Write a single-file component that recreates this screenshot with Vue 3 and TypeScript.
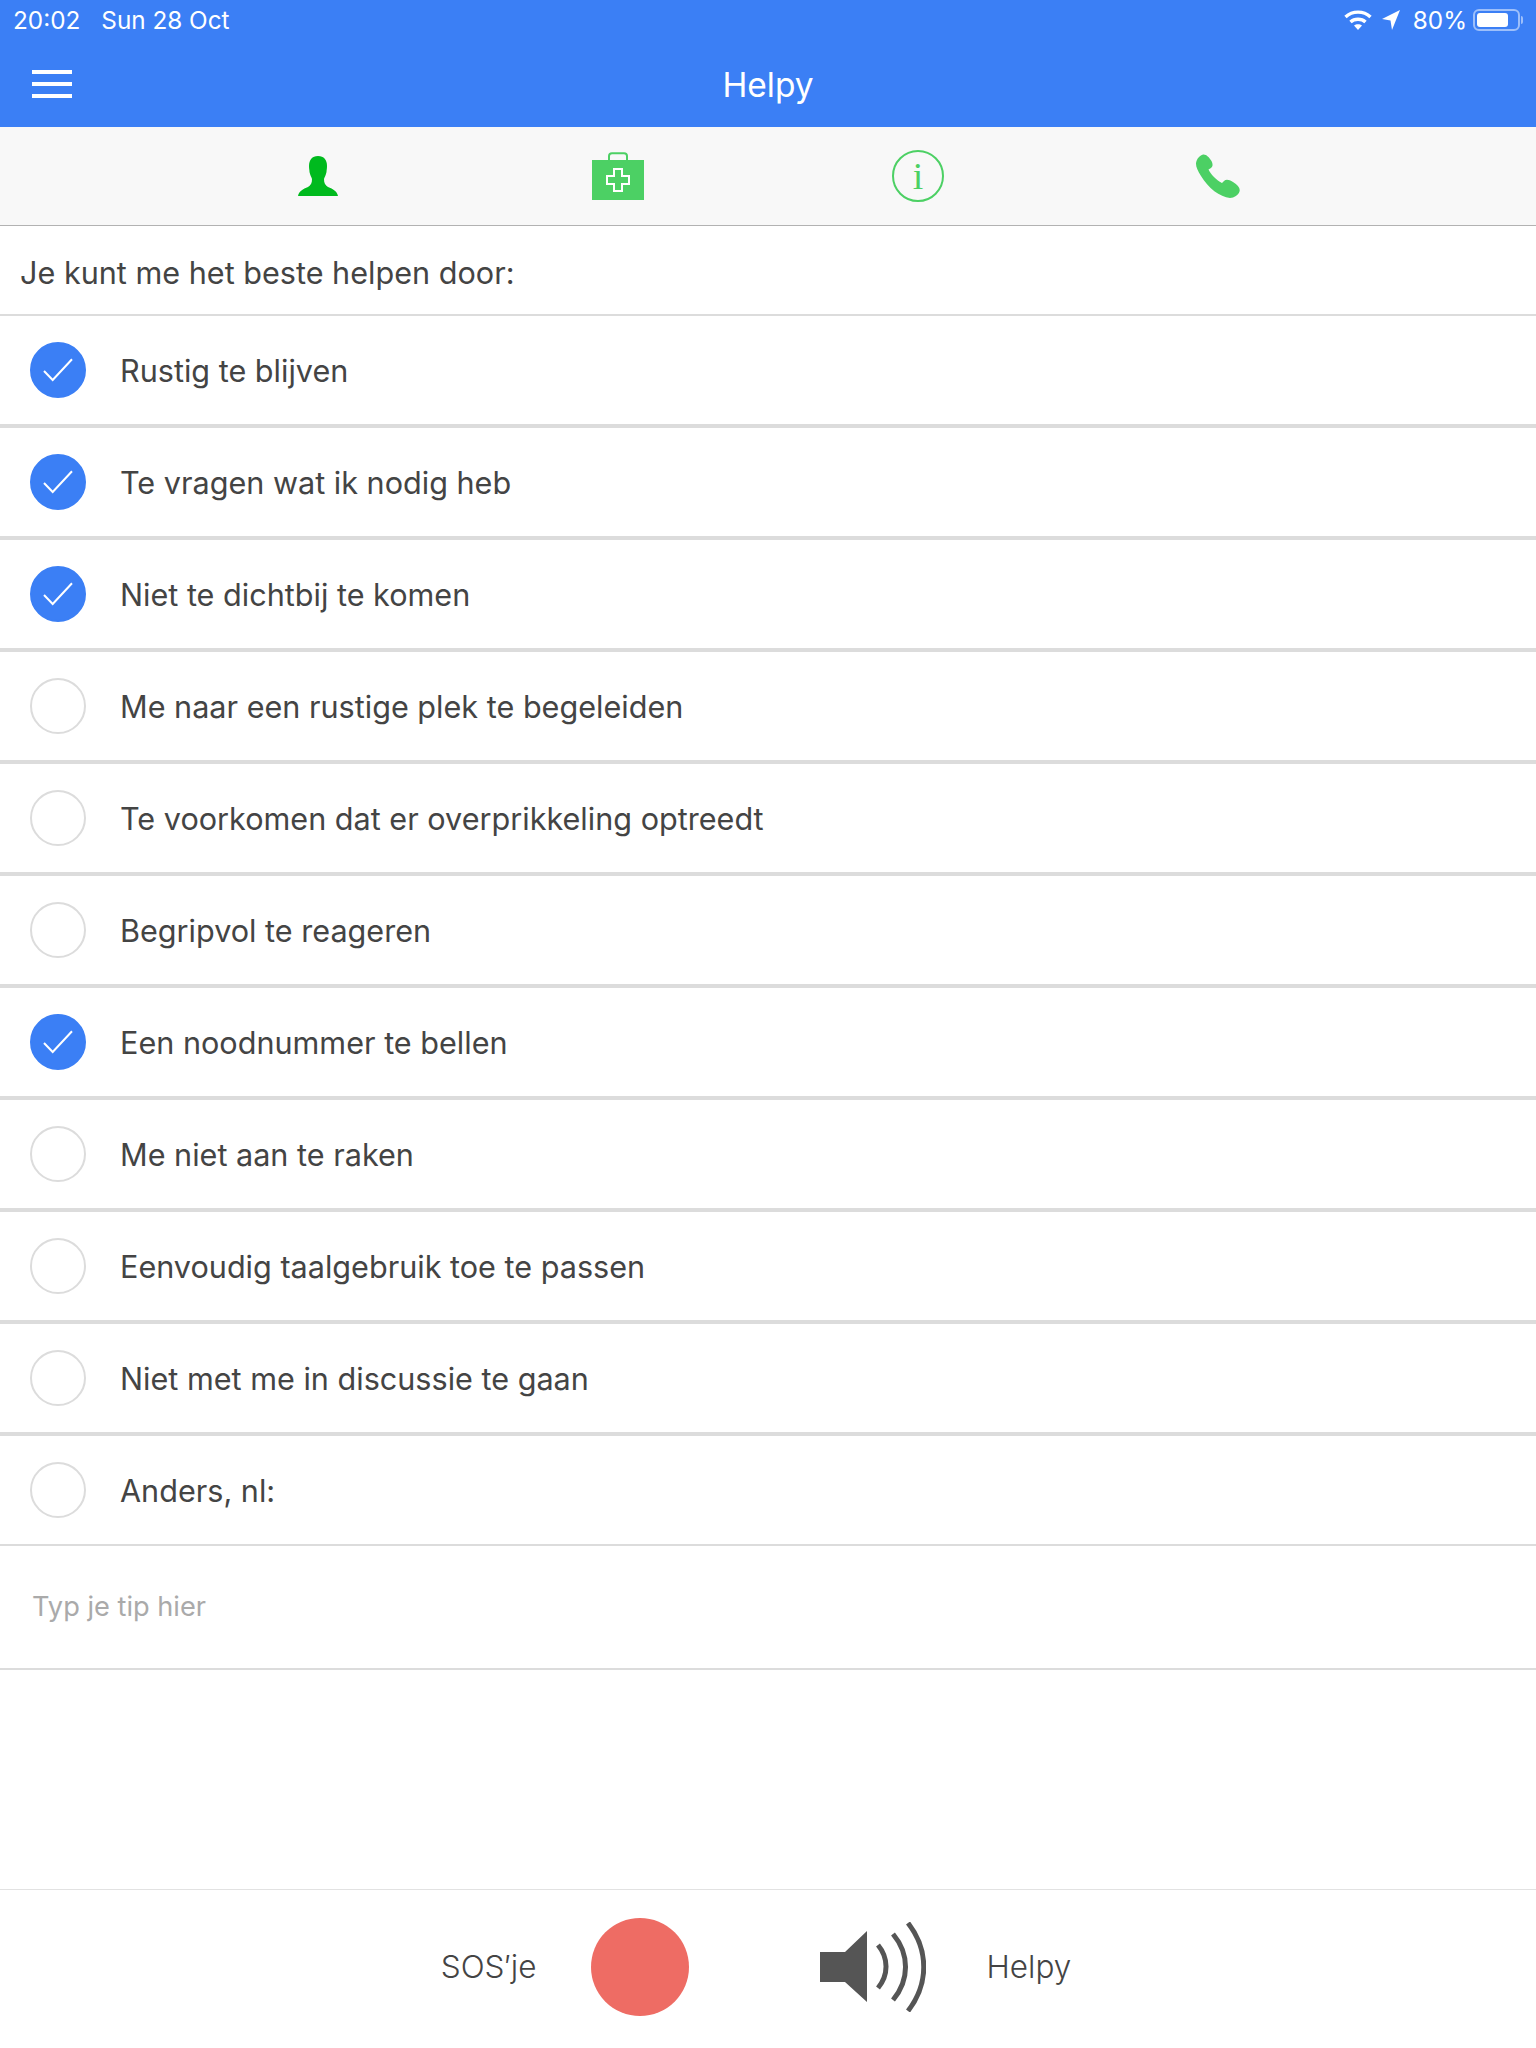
<template>
  <div class="page">
    <!-- Status bar + nav -->
    <header class="top">
      <div class="status">
        <div class="status-left">
          <span>20:02</span>
          <span>Sun 28 Oct</span>
        </div>
        <div class="status-right">
          <svg class="wifi" width="28" height="22" viewBox="0 0 28 22">
            <path d="M1.5 8 C8.5 1.5 19.5 1.5 26.5 8" fill="none" stroke="#fff" stroke-width="3.4" />
            <path d="M6.5 13 C10.5 9.3 17.5 9.3 21.5 13" fill="none" stroke="#fff" stroke-width="3.4" />
            <path d="M10 16.6 C12.2 14.8 15.8 14.8 18 16.6 L14 21 Z" fill="#fff" />
          </svg>
          <svg class="arrow" width="18" height="20" viewBox="0 0 18 20">
            <path d="M18 0 L0 9 L8.5 10.5 L10 20 Z" fill="#fff" />
          </svg>
          <span class="pct">80%</span>
          <div class="battery">
            <div class="battery-fill"></div>
          </div>
          <div class="battery-nub"></div>
        </div>
      </div>
      <div class="nav">
        <button type="button" class="menu" aria-label="Menu">
          <span></span><span></span><span></span>
        </button>
        <h1>Helpy</h1>
      </div>
    </header>

    <!-- Tabs -->
    <nav class="tabs">
      <div class="tab">
        <svg width="40" height="40" viewBox="0 0 40 40">
          <path
            d="M20 0 C26 0 29 4 29 10 C29 13 28.5 14 28.5 16 C28 19 26.5 21 26 23 C26 27 27 29 30 31 C35 33 39 35 40 40 H0 C1 35 5 33 10 31 C13 29 14 27 14 23 C13.5 21 12 19 11.5 16 C11.5 14 11 13 11 10 C11 4 14 0 20 0 Z"
            fill="#00ba1e"
          />
        </svg>
      </div>
      <div class="tab">
        <svg width="52" height="48" viewBox="0 0 52 48">
          <path d="M17 9 V4 Q17 1.2 20 1.2 H32 Q35 1.2 35 4 V9" fill="none" stroke="#4cd064" stroke-width="2" />
          <rect x="0" y="8" width="52" height="40" fill="#4cd064" />
          <path
            d="M22 17 H30 V24 H37 V32 H30 V39 H22 V32 H15 V24 H22 Z"
            fill="none"
            stroke="#fff"
            stroke-width="2"
          />
        </svg>
      </div>
      <div class="tab">
        <div class="info">i</div>
      </div>
      <div class="tab">
        <svg width="44" height="44" viewBox="0 0 44 44">
          <path
            d="M7 0.5 C10 0 13 3 15.5 7 C17 10 17 12 15 14 L12.5 15.5 C14.5 20 20 26 26 29 L28 27 C30 25 33 25.5 37 28 C42 31 44.5 34 43.5 37.5 C42.5 41 38 44 34 44 C24 43 12 34 5 22 C1 16 -1 11 0.5 7 C1.5 4 4 1.5 7 0.5 Z"
            fill="#4cd064"
          />
        </svg>
      </div>
    </nav>

    <p class="intro">Je kunt me het beste helpen door:</p>

    <!-- Lijst -->
    <ul class="list">
      <li v-for="t in tips" :key="t.label" class="row">
        <span class="check" :class="{ on: t.checked }">
          <svg v-if="t.checked" width="56" height="56" viewBox="0 0 56 56">
            <path d="M14 29 L22.7 38 L42 17.3" fill="none" stroke="#fff" stroke-width="2" />
          </svg>
        </span>
        <span class="row-label">{{ t.label }}</span>
      </li>
    </ul>

    <div class="input-row">
      <input type="text" placeholder="Typ je tip hier" />
    </div>

    <!-- Footer -->
    <footer class="footer">
      <div class="sos">
        <span class="foot-label">SOS′je</span>
        <span class="record"></span>
      </div>
      <div class="helpy">
        <svg width="106" height="90" viewBox="0 0 106 90">
          <path d="M0 30 H25 L47 9 V80 L25 60 H0 Z" fill="#555" />
          <path d="M58 23 C68.7 36 68.7 53 58 66" fill="none" stroke="#555" stroke-width="5" />
          <path d="M73 12 C89.7 32 89.7 58 73 78" fill="none" stroke="#555" stroke-width="5" />
          <path d="M88 1 C109 28 109 62 88 89" fill="none" stroke="#555" stroke-width="5" />
        </svg>
        <span class="foot-label">Helpy</span>
      </div>
    </footer>
  </div>
</template>

<script setup lang="ts">
interface Tip {
  label: string
  checked: boolean
}

const tips: Tip[] = [
  { label: 'Rustig te blijven', checked: true },
  { label: 'Te vragen wat ik nodig heb', checked: true },
  { label: 'Niet te dichtbij te komen', checked: true },
  { label: 'Me naar een rustige plek te begeleiden', checked: false },
  { label: 'Te voorkomen dat er overprikkeling optreedt', checked: false },
  { label: 'Begripvol te reageren', checked: false },
  { label: 'Een noodnummer te bellen', checked: true },
  { label: 'Me niet aan te raken', checked: false },
  { label: 'Eenvoudig taalgebruik toe te passen', checked: false },
  { label: 'Niet met me in discussie te gaan', checked: false },
  { label: 'Anders, nl:', checked: false },
]
</script>

<style>
html,
body {
  margin: 0;
  background: #fff;
}
</style>

<style scoped>
.page {
  height: 2048px;
  display: flex;
  flex-direction: column;
  font-family: Inter, 'Liberation Sans', sans-serif;
  color: #444;
  overflow: hidden;
}

.top {
  background: #3b7ff5;
  color: #fff;
  height: 127px;
}

.status {
  height: 40px;
  display: flex;
  align-items: center;
  justify-content: space-between;
  font-size: 24.3px;
  padding: 0 13px;
}

.status-left {
  display: flex;
  gap: 21px;
}

.status-right {
  display: flex;
  align-items: center;
}

.wifi {
  margin-right: 10px;
}

.arrow {
  margin-right: 13px;
}

.pct {
  margin-right: 6px;
}

.battery {
  width: 47px;
  height: 22px;
  box-sizing: border-box;
  border: 2px solid rgba(255, 255, 255, 0.5);
  border-radius: 6px;
  padding: 2px;
}

.battery-fill {
  width: 80%;
  height: 100%;
  background: #fff;
  border-radius: 3px;
}

.battery-nub {
  width: 2px;
  height: 8px;
  margin-left: 1px;
  background: rgba(255, 255, 255, 0.5);
  border-radius: 0 2px 2px 0;
}

.nav {
  position: relative;
  height: 87px;
  display: flex;
  align-items: center;
  justify-content: center;
}

.nav h1 {
  margin: 0;
  padding-top: 2px;
  font-size: 33.5px;
  font-weight: 400;
}

.menu {
  position: absolute;
  left: 32px;
  top: 30px;
  width: 40px;
  padding: 0;
  border: none;
  background: none;
  display: flex;
  flex-direction: column;
  gap: 8px;
}

.menu span {
  display: block;
  height: 4px;
  background: #fff;
}

.tabs {
  height: 98px;
  background: #f8f8f8;
  border-bottom: 1px solid #b2b2b2;
  display: grid;
  grid-template-columns: repeat(4, 300px);
  justify-content: center;
  align-items: center;
}

.tab {
  display: flex;
  justify-content: center;
  align-items: center;
}

.info {
  width: 52px;
  height: 52px;
  box-sizing: border-box;
  border: 2px solid #4cd064;
  border-radius: 50%;
  color: #4cd064;
  font-family: 'Liberation Serif', serif;
  font-size: 38px;
  line-height: 48px;
  text-align: center;
}

.intro {
  margin: 0;
  height: 90px;
  box-sizing: border-box;
  padding: 5px 0 0 20px;
  display: flex;
  align-items: center;
  border-bottom: 2px solid #dcdcdc;
  font-size: 30.6px;
}

.list {
  list-style: none;
  margin: 0;
  padding: 0;
}

.row {
  height: 108px;
  display: flex;
  align-items: center;
  padding-left: 30px;
  border-bottom: 4px solid #dcdcdc;
}

.row:last-child {
  border-bottom-width: 2px;
}

.check {
  width: 56px;
  height: 56px;
  box-sizing: border-box;
  border: 2px solid #dcdcdc;
  border-radius: 50%;
  flex: none;
  position: relative;
}

.check.on {
  background: #3b7ff5;
  border-color: #3b7ff5;
}

.check svg {
  position: absolute;
  left: -2px;
  top: -2px;
}

.row-label {
  margin-left: 34px;
  font-size: 30.6px;
}

.input-row {
  height: 124px;
  box-sizing: border-box;
  border-bottom: 2px solid #dcdcdc;
  padding: 0 0 2px 32px;
  display: flex;
  align-items: center;
}

.input-row input {
  border: none;
  outline: none;
  padding: 0;
  width: 600px;
  font-family: inherit;
  font-size: 27.2px;
  color: #444;
  background: transparent;
}

.input-row input::placeholder {
  color: #aaa;
  opacity: 1;
}

.footer {
  margin-top: auto;
  height: 159px;
  box-sizing: border-box;
  border-top: 1px solid #e2e2e2;
  padding: 0 24px 5px 0;
  display: flex;
  justify-content: center;
  align-items: center;
  gap: 131px;
}

.sos,
.helpy {
  display: flex;
  align-items: center;
}

.sos {
  gap: 55px;
}

.helpy {
  gap: 60px;
}

.foot-label {
  font-size: 31.5px;
  font-weight: 300;
}

.record {
  width: 98px;
  height: 98px;
  border-radius: 50%;
  background: #ee6c64;
}
</style>
